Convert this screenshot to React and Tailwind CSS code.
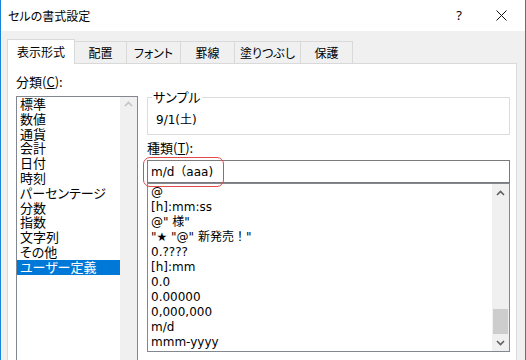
import React from "react";

const ui = "font-['Noto_Sans_CJK_JP','Noto_Sans',sans-serif] [font-feature-settings:'palt']";
const latin = "font-['DejaVu_Sans','Noto_Sans_CJK_JP',sans-serif] [font-feature-settings:normal]";

const ChevronUp = ({ color = "#606060" }) => (
  <svg width="9" height="6" viewBox="0 0 9 6">
    <path d="M1 5 L4.5 1.5 L8 5" fill="none" stroke={color} strokeWidth="1.6" />
  </svg>
);

const ChevronDown = ({ color = "#606060" }) => (
  <svg width="9" height="6" viewBox="0 0 9 6">
    <path d="M1 1 L4.5 4.5 L8 1" fill="none" stroke={color} strokeWidth="1.6" />
  </svg>
);

const categories = [
  "標準",
  "数値",
  "通貨",
  "会計",
  "日付",
  "時刻",
  "パーセンテージ",
  "分数",
  "指数",
  "文字列",
  "その他",
  "ユーザー定義",
];

const formats = [
  "@",
  "[h]:mm:ss",
  '@" 様"',
  '"★ "@" 新発売！"',
  "0.????",
  "[h]:mm",
  "0.0",
  "0.00000",
  "0,000,000",
  "m/d",
  "mmm-yyyy",
];

const tabs = [
  { label: "配置", w: "w-[52px]" },
  { label: "フォント", w: "w-[54px]" },
  { label: "罫線", w: "w-[54px]" },
  { label: "塗りつぶし", w: "w-[66px]" },
  { label: "保護", w: "w-[52px]" },
];

export default function App() {
  return (
    <div className={`w-[526px] h-[360px] overflow-hidden bg-[#f0f0f0] border-x border-[#1883d7] flex flex-col text-black ${ui}`}>
      {/* Title bar */}
      <div className="h-[31px] shrink-0 bg-white flex items-center pl-[7px] pr-[18px]">
        <span className="text-[12px]">セルの書式設定</span>
        <div className="ml-auto flex items-center">
          <span className="text-[13px] font-['Noto_Sans',sans-serif]">?</span>
          <svg className="ml-[34px]" width="11" height="11" viewBox="0 0 11 11">
            <path d="M0.5 0.5 L10.5 10.5 M10.5 0.5 L0.5 10.5" stroke="#111" strokeWidth="1" />
          </svg>
        </div>
      </div>

      {/* Tabs */}
      <div className="mt-[8px] ml-[6px] h-[24px] shrink-0 flex items-end">
        <div className="relative z-10 -mb-px h-[25px] w-[68px] bg-white border-x border-t border-[#d9d9d9] flex items-center justify-center text-[12px]">
          表示形式
        </div>
        {tabs.map((t) => (
          <div
            key={t.label}
            className={`h-[22px] ${t.w} border-t border-r border-[#d9d9d9] flex items-center justify-center text-[12px]`}
          >
            {t.label}
          </div>
        ))}
      </div>

      {/* Panel */}
      <div className="ml-[6px] w-[510px] h-[320px] shrink-0 bg-white border border-[#d9d9d9] flex pl-[8px] gap-[9px]">
        {/* Category column */}
        <div className="w-[122px] shrink-0 flex flex-col">
          <div className="mt-[11px] text-[13px] leading-[14px]">
            分類(<span className="underline">C</span>):
          </div>
          <div className="mt-[7px] h-[300px] border border-[#828790] flex">
            <div className="flex-1 flex flex-col">
              {categories.map((c, i) => (
                <div
                  key={c}
                  className={`h-[14.8px] leading-[14.8px] text-[13px] pl-[3px] whitespace-nowrap ${
                    i === categories.length - 1 ? "bg-[#0078d7] text-white" : ""
                  }`}
                >
                  {c}
                </div>
              ))}
            </div>
            <div className="w-[17px] bg-[#f0f0f0] flex flex-col">
              <div className="h-[14px] flex items-center justify-center">
                <ChevronUp color="#c4c4c4" />
              </div>
            </div>
          </div>
        </div>

        {/* Right column */}
        <div className="w-[363px] shrink-0 flex flex-col mt-[26px]">
          <fieldset className="border border-[#dcdcdc] pl-[4px] pt-[9px] pb-[6px]">
            <legend className="px-[1px] text-[13px] leading-[14px]">サンプル</legend>
            <div className={`pl-[4px] h-[15px] leading-[15px] text-[12px] ${latin}`}>9/1(土)</div>
          </fieldset>

          <div className="mt-[6px] text-[13px] leading-[14px]">
            種類(<span className="underline">T</span>):
          </div>

          <div className="relative mt-[5px]">
            <div className={`h-[23px] border border-[#7a7a7a] flex items-center pl-[3px] text-[12px] ${latin}`}>
              m/d（aaa)
            </div>
            <span className="absolute -left-[4px] -top-[3px] w-[81px] h-[30px] border border-[#e04a4a] rounded-[7px] pointer-events-none" />
          </div>

          <div className="h-[169px] border border-[#828790] flex">
            <div className={`flex-1 flex flex-col pt-[1px] pl-[3px] text-[12px] ${latin}`}>
              {formats.map((f) => (
                <div key={f} className="h-[15px] leading-[15px] whitespace-nowrap">
                  {f}
                </div>
              ))}
            </div>
            <div className="w-[17px] bg-[#f0f0f0] flex flex-col">
              <div className="h-[17px] flex items-center justify-center">
                <ChevronUp />
              </div>
              <div className="flex-1" />
              <div className="h-[25px] mx-[1px] bg-[#cdcdcd]" />
              <div className="h-[17px] flex items-center justify-center">
                <ChevronDown />
              </div>
            </div>
          </div>
        </div>
      </div>
    </div>
  );
}
